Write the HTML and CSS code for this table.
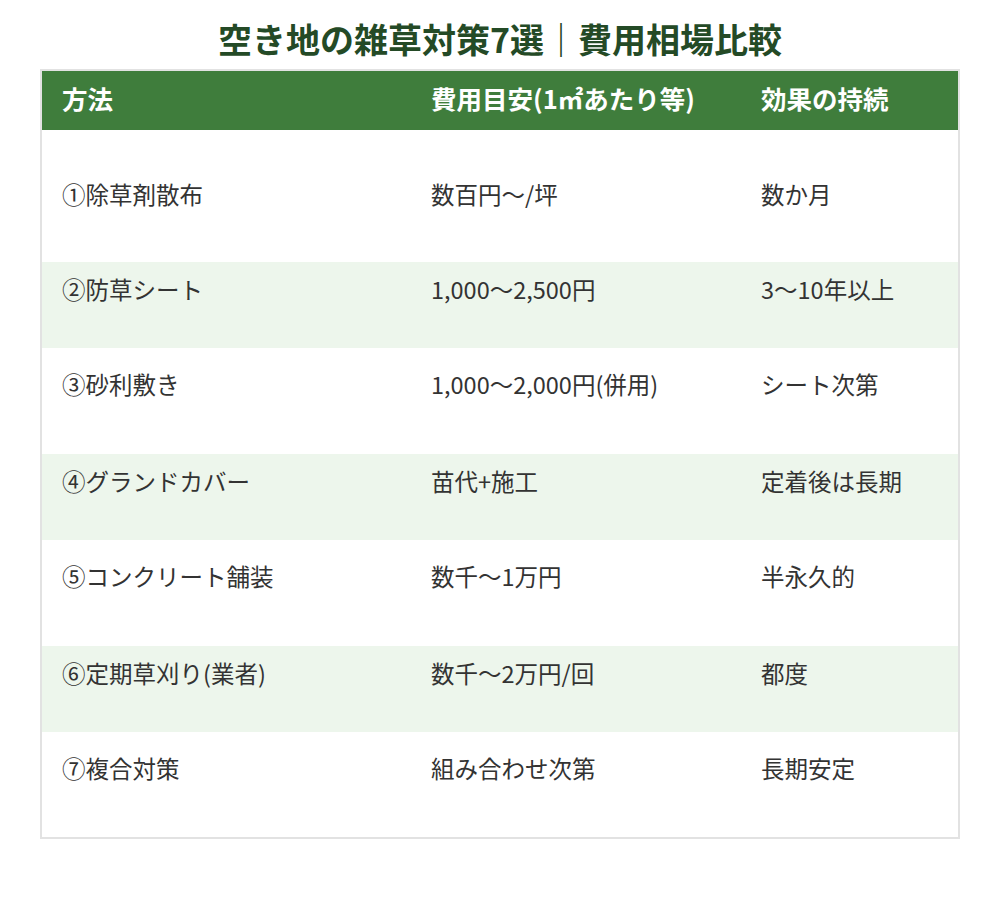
FILE: index.html
```html
<!DOCTYPE html>
<html lang="ja">
<head>
<meta charset="utf-8">
<link rel="stylesheet" href="styles.css">
</head>
<body>
<div class="page">
  <h1 class="title">空き地の雑草対策7選｜費用相場比較</h1>
  <table class="cmp">
    <thead>
      <tr class="head">
        <th class="c1">方法</th>
        <th class="c2">費用目安(1㎡あたり等)</th>
        <th class="c3">効果の持続</th>
      </tr>
    </thead>
    <tbody>
      <tr class="r-first"><td>①除草剤散布</td><td>数百円〜/坪</td><td>数か月</td></tr>
      <tr class="r-tint"><td>②防草シート</td><td>1,000〜2,500円</td><td>3〜10年以上</td></tr>
      <tr class="r-white"><td>③砂利敷き</td><td>1,000〜2,000円(併用)</td><td>シート次第</td></tr>
      <tr class="r-tint"><td>④グランドカバー</td><td>苗代+施工</td><td>定着後は長期</td></tr>
      <tr class="r-white"><td>⑤コンクリート舗装</td><td>数千〜1万円</td><td>半永久的</td></tr>
      <tr class="r-tint"><td>⑥定期草刈り(業者)</td><td>数千〜2万円/回</td><td>都度</td></tr>
      <tr class="r-white"><td>⑦複合対策</td><td>組み合わせ次第</td><td>長期安定</td></tr>
    </tbody>
  </table>
</div>
</body>
</html>
```

FILE: styles.css
```css
html, body {
  margin: 0;
  padding: 0;
  background: #ffffff;
}
body {
  font-family: "Noto Sans CJK JP", "Noto Sans", sans-serif;
  color: #333333;
}
.page {
  padding: 15px 40px 0 40px;
}
.title {
  margin: 0 0 6px 0;
  text-align: center;
  font-size: 34px;
  line-height: 48px;
  font-weight: 700;
  color: #244a26;
}
.cmp {
  width: 920px;
  border-collapse: collapse;
  border: 2px solid #e2e2e2;
  table-layout: fixed;
}
.cmp th, .cmp td {
  text-align: left;
  padding: 0 0 0 20px;
  font-size: 23.5px;
  line-height: 32px;
  vertical-align: top;
  box-sizing: border-box;
}
.cmp th {
  font-size: 25.5px;
  font-weight: 700;
  color: #ffffff;
  background: #3f7d3c;
  height: 60px;
  vertical-align: middle;
  padding-bottom: 5px;
}
.c1 { width: 370px; }
.c2 { width: 330px; }
.cmp td {
  font-weight: 400;
  color: #333333;
}
.r-first td {
  height: 132px;
  vertical-align: middle;
  padding-bottom: 4px;
}
.r-tint td {
  background: #edf6ec;
  height: 86px;
  padding-top: 11px;
}
.r-white td {
  background: #ffffff;
  height: 106px;
  padding-top: 20px;
}
```
